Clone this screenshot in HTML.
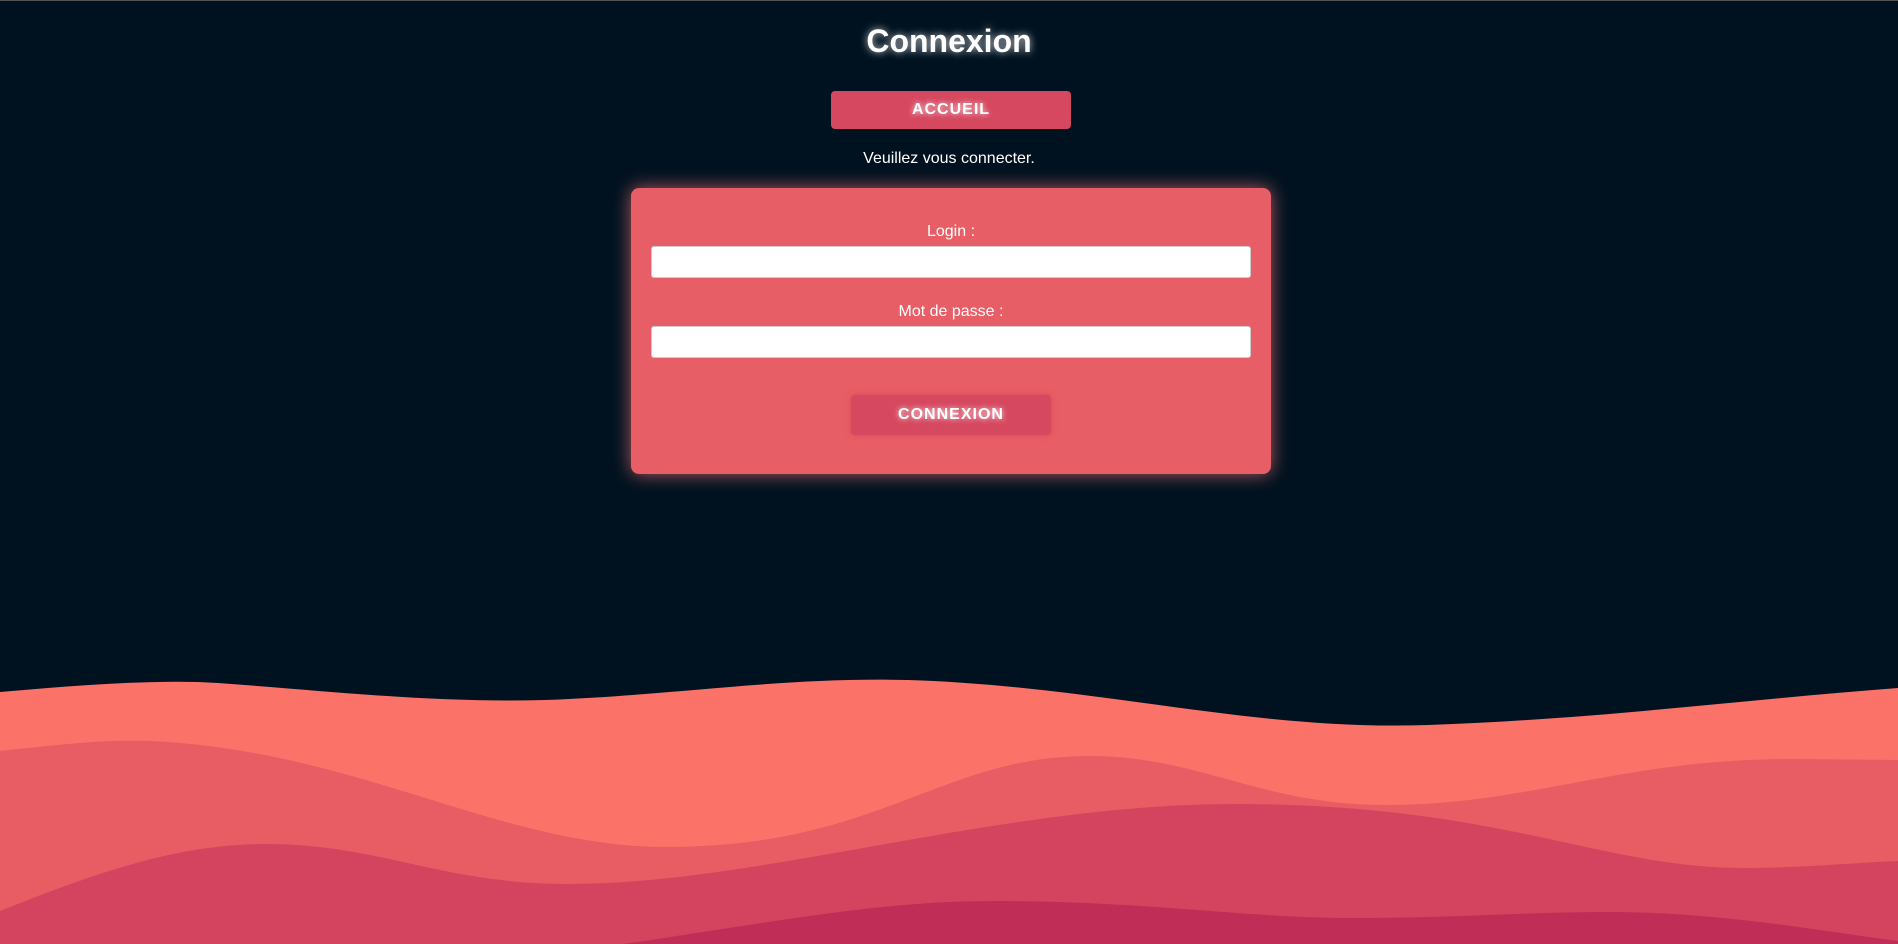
<!DOCTYPE html>
<html><head><meta charset="utf-8"><style>
html,body{margin:0;padding:0;width:1898px;height:944px;overflow:hidden;background:#001220;font-family:"Liberation Sans",sans-serif;color:#fff;}
body{border-top:1px solid #555;box-sizing:border-box;position:relative;}
h1{position:absolute;top:22px;left:0;width:100%;text-align:center;margin:0;font-size:32px;font-weight:bold;text-shadow:0 0 8px rgba(255,255,255,.8);}
.btn{position:absolute;background:#D6485F;border-radius:4px;text-align:center;font-weight:bold;font-size:16px;letter-spacing:1px;text-shadow:0 0 6px rgba(255,255,255,.9);}
.acc{left:831px;top:90px;width:240px;height:38px;line-height:38px;}
.msg{position:absolute;top:149px;width:100%;text-align:center;font-size:16px;}
.card{position:absolute;left:631px;top:187px;width:640px;height:286px;background:#E85E66;border-radius:8px;box-shadow:0 0 18px rgba(255,120,120,.7);}
.lbl{position:absolute;width:100%;text-align:center;font-size:16px;}
.inp{position:absolute;left:20px;width:598px;height:30px;background:#fff;border:1px solid #ccc;border-radius:3px;}
.cx{left:220px;top:207px;width:200px;height:40px;line-height:40px;box-shadow:0 0 6px rgba(200,50,70,.5);}
svg{position:absolute;left:0;top:0;}
</style></head><body>
<svg width="1898" height="944" viewBox="0 0 1898 944">
<path d="M0 691 C80 684 160 678 218 682 C330 690 430 702 545 699 C680 694 780 676 908 679 C1100 685 1250 730 1428 724 C1600 718 1750 698 1898 687 L1898 944 L0 944Z" fill="#FB7268"/>
<path d="M0 750 C50 745 100 738 151 740 C360 750 500 846 666 846 C880 846 940 755 1089 755 C1200 755 1260 804 1386 804 C1530 804 1620 758 1792 758 L1898 759 L1898 944 L0 944Z" fill="#E85C64"/>
<path d="M0 910 C100 870 180 843 266 843 C380 843 440 883 569 883 C760 883 1000 803 1235 803 C1500 803 1600 867 1743 867 C1800 867 1850 862 1898 860 L1898 944 L0 944Z" fill="#D4445E"/>
<path d="M617 944 C780 920 880 900 993 900 C1150 900 1240 917 1356 917 C1460 917 1520 911 1610 911 C1720 911 1820 930 1898 940 L1898 944Z" fill="#C02E57"/>
</svg>
<h1>Connexion</h1>
<div class="btn acc">ACCUEIL</div>
<div class="msg">Veuillez vous connecter.</div>
<div class="card">
<div class="lbl" style="top:35px">Login :</div>
<div class="inp" style="top:58px"></div>
<div class="lbl" style="top:115px">Mot de passe :</div>
<div class="inp" style="top:138px"></div>
<div class="btn cx">CONNEXION</div>
</div>
</body></html>
